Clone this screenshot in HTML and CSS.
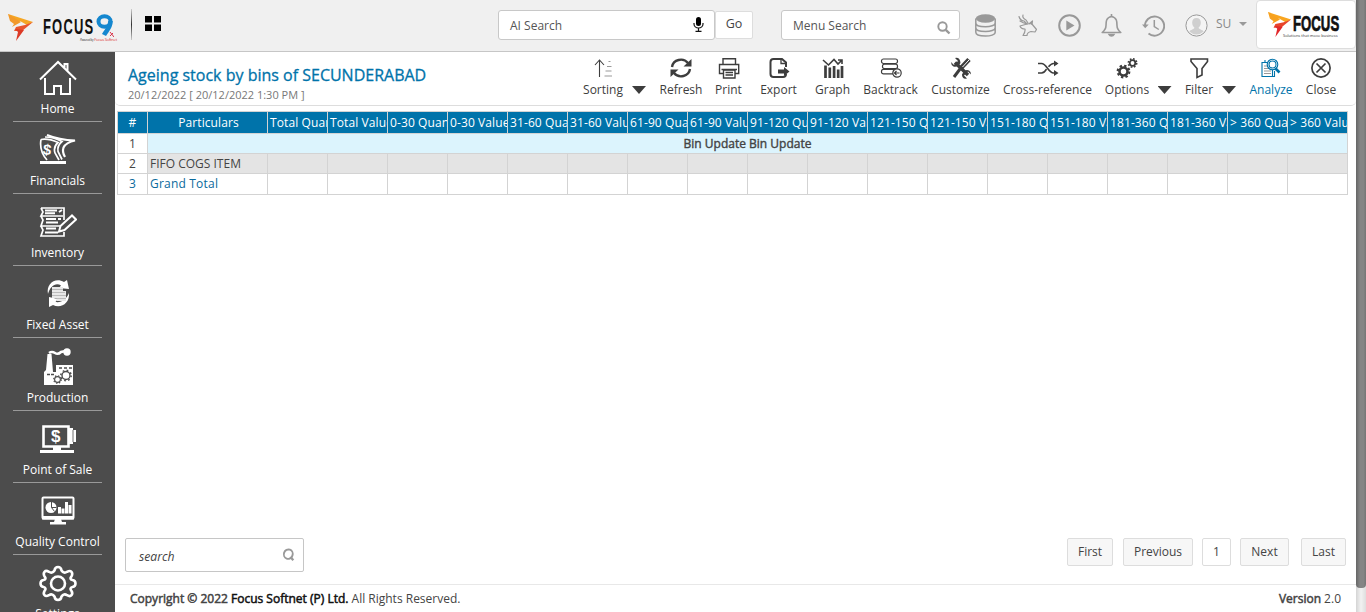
FILE: index.html
```html
<!DOCTYPE html>
<html lang="en">
<head>
<meta charset="utf-8">
<title>Ageing stock by bins</title>
<link rel="stylesheet" href="styles.css">
</head>
<body>
<div class="app">
  <header class="topbar">
    <div class="brand">
      <svg class="brand-mark" width="26" height="28" viewBox="0 0 26 28"><path d="M0 0L25 8L19 11L12 7L6 9Z" fill="#f5a623"/><path d="M0 0L13 8L4 13L6 10L2 7Z" fill="#f2992a"/><path d="M25 8L14 17L6 17L8 13L17 11Z" fill="#e8552b"/><path d="M7 15L16 16L8 27L10 18Z" fill="#dc3a26"/></svg>
      <span class="brand-name">FOCUS</span>
      <svg class="brand-nine" width="18" height="23" viewBox="0 0 18 23" fill="none" stroke="#1487cf"><ellipse cx="8.500" cy="7.500" rx="6" ry="5.300" stroke-width="4"/><path d="M14.500 7c0 7-4 9-6.500 14" stroke-width="4.500"/><path d="M14 18l4 5M14 22l3-3" stroke="#d8334a" stroke-width="1"/></svg>
      <span class="brand-sub"><i>Powered by</i> Focus Softnet</span>
    </div>
    <span class="brand-rule"></span>
    <svg class="grid-icon" width="16" height="15" viewBox="0 0 16 15"><path d="M0 0h7v6.500H0zM9 0h7v6.500H9zM0 8.500h7V15H0zM9 8.500h7V15H9z"/></svg>
    <div class="field ai"><span>AI Search</span>
      <svg width="11" height="15" viewBox="0 0 11 15"><rect x="3" y="0" width="5" height="9" rx="2.500"/><path d="M1 6v1a4.500 4 0 0 0 9 0V6M5.500 11v3M2.500 14.300h6" fill="none" stroke="#111" stroke-width="1.200"/></svg>
    </div>
    <button class="go">Go</button>
    <div class="field menu"><span>Menu Search</span>
      <svg width="14" height="14" viewBox="0 0 14 14" fill="none" stroke="#999"><circle cx="5.500" cy="5.500" r="4.200" stroke-width="1.900"/><path d="M8.800 8.800l3.700 3.700" stroke-width="2.400"/></svg>
    </div>
    <div class="top-icons">
      <svg width="21" height="23" viewBox="0 0 21 23"><g fill="#999"><ellipse cx="10.500" cy="4.500" rx="9.700" ry="4.200"/></g><path d="M.8 4.500v13.800c0 5 19.400 5 19.400 0V4.500M.8 9c0 5 19.400 5 19.400 0M.8 13.700c0 5 19.400 5 19.400 0" fill="none" stroke="#999" stroke-width="1.500"/></svg>
      <svg width="19" height="23" viewBox="0 0 19 23" fill="none" stroke="#999" stroke-width="1.200" stroke-linejoin="round" stroke-linecap="round"><path d="M1 2.500q1 4 5 4.500l3 3M5 1q-1 3 3 5l2 3M2 7q3 2 7 3"/><path d="M9 10L2 12q1 3 5 3 .500 3-2 6.500h4q0-3 4-4l4 .500 1.500-2.500-5-6z"/><path d="M11.500 9.500l3-2.500-.5 3.500"/></svg>
      <svg width="23" height="23" viewBox="0 0 23 23"><circle cx="11.500" cy="11.500" r="10.300" fill="none" stroke="#999" stroke-width="2"/><path d="M8.300 6.500l8.200 5-8.200 5z" fill="#999"/></svg>
      <svg width="21" height="23" viewBox="0 0 21 23" fill="none" stroke="#999" stroke-width="1.600"><path d="M10.500 2.500C5 3.500 5 8 5 11.500S3 17 1.200 18.500h18.600C18 17 16 15 16 11.500s0-8-5.500-9z" stroke-linejoin="round"/><path d="M10.500 0v3M8 20.500c1 2 4 2 5 0z" fill="#999"/></svg>
      <svg width="23" height="22" viewBox="0 0 23 22" fill="none" stroke="#999" stroke-width="1.900"><path d="M3 12a9.600 9.600 0 1 1 3.500 6.500"/><path d="M0 9.500l3.200 3.700 3.500-3.700z" fill="#999" stroke="none"/><path d="M12.300 5v6.500l4.500 3" stroke-width="1.500"/></svg>
      <svg width="23" height="23" viewBox="0 0 23 23"><circle cx="11.500" cy="11.500" r="10.600" fill="#f4f4f4" stroke="#999"/><path d="M11.500 4c-3 0-4.500 2-4.300 5 .1 2 1 3.500 2.200 4.600-.200 2-3.800 2-5 4a10 10 0 0 0 14.200 0c-1.200-2-4.800-2-5-4 1.200-1.100 2.100-2.600 2.200-4.600.200-3-1.300-5-4.300-5z" fill="#cfcfcf"/></svg>
    </div>
    <span class="user">SU</span><span class="caret-sm"></span>
    <div class="logo-card">
      <svg class="logo-mark" width="24" height="26" viewBox="0 0 26 28"><path d="M0 0L25 8L19 11L12 7L6 9Z" fill="#f9a51f"/><path d="M0 0L13 8L4 13L6 10L2 7Z" fill="#f7a11f"/><path d="M25 8L14 17L6 17L8 13L17 11Z" fill="#e8452c"/><path d="M7 15L16 16L8 27L10 18Z" fill="#e2282b"/></svg>
      <div class="logo-words"><b>FOCUS</b><small>Solutions that move business</small></div>
    </div>
  </header>

  <div class="main">
    <nav class="side">
      <a class="nav"><svg width="38" height="36" viewBox="0 0 38 36" fill="none" stroke="#fff" stroke-width="2"><path d="M1 19.500L19 2l18 17.500M6 18v16h9v-8h7v8h9V18M25.500 8V4h3v7"/></svg><span>Home</span></a>
      <a class="nav"><svg width="38" height="36" viewBox="0 0 38 36" fill="none" stroke="#fff" stroke-width="1.700"><path d="M2 7.500Q9 6 19 10.500 14 15 16 21l4 7M2 7.500Q0 19 8 28"/><path d="M6 5q8 0 17 4.500-5 4-4 10l4 8"/><path d="M8 3q12 5 28 5.500-9 2-11.500 7Q23 20 26 25" stroke-width="2.200"/><path d="M1 30.500h26" stroke-width="3"/></svg><b class="ico-dollar tilt">$</b><span>Financials</span></a>
      <a class="nav"><svg width="38" height="36" viewBox="0 0 38 36" fill="none" stroke="#fff" stroke-width="1.700"><path d="M2 4h23v7.500M2 4l2 4-2 4h22M2 12l2 4-2 6h20M2 22l2 4-2 6h23v-4M25 11v5"/><path d="M6 6.500h12M6 9.300h10M7 15h10M7 18.500h12M7 24.500h10M6 28.500h13M20 8l3-2M19 15h3" stroke-width="2"/><path d="M20 27.500l1.500-5.500L33 11.500l4 4L25.500 26z" fill="#4c4c4c" stroke-width="2"/></svg><span>Inventory</span></a>
      <a class="nav"><svg width="38" height="36" viewBox="0 0 38 36"><path d="M9 18C7 8 16 1 25 6l3-2 2 9-10-1 2-2.500C17 6 11 10 9 18z" fill="#fff"/><path d="M30 17c1 10-8 16-16 12l-4 2 0-10 9 2-2.500 3c6 1 11-3 13.500-9z" fill="#fff"/><g fill="#e8e8e8" stroke="#777" stroke-width=".4"><path d="M13 11h11v4h3v10h-9l-1-3h-4z" stroke="none"/><path d="M13 13.500h11M13 16.500h13M13 19.500h14M17 22.500h10" fill="none"/></g></svg><span>Fixed Asset</span></a>
      <a class="nav"><svg width="38" height="38" viewBox="0 0 38 38"><path d="M5 37V24l2-2 1.500-16h4L14 24h3v-7h17v20z" fill="#fff"/><path d="M10 5q3-2 6 0t6-1l5-1" fill="none" stroke="#fff" stroke-width="2.500"/><circle cx="28" cy="4" r="3.700" fill="#fff"/><path d="M20 20h3M25 20h3M30 20h3M8 26.500h3M12 26.500h3" stroke="#4c4c4c" stroke-width="1.500"/><g fill="none" stroke="#4c4c4c"><circle cx="27" cy="27.500" r="4" stroke-width="1.400"/><circle cx="27" cy="27.500" r="5.200" stroke-width="1.500" stroke-dasharray="1.700 2.380"/><circle cx="18.500" cy="31.500" r="2.900" stroke-width="1.100"/><circle cx="18.500" cy="31.500" r="3.800" stroke-width="1.200" stroke-dasharray="1.300 1.680"/></g></svg><span>Production</span></a>
      <a class="nav"><svg width="38" height="36" viewBox="0 0 38 36"><path d="M4.500 5.500h25v20h-25z" fill="none" stroke="#fff" stroke-width="2.600"/><path d="M29 7h5v2h3v12h-3v2h-5zM1 29h34v3H1zM14 26h8v4h-8z" fill="#fff"/><path d="M34 9v12" stroke="#4c4c4c" stroke-width=".8"/></svg><b class="ico-dollar">$</b><span>Point of Sale</span></a>
      <a class="nav"><svg width="38" height="36" viewBox="0 0 38 36"><rect x="3.500" y="4.500" width="31" height="21" rx="1" fill="none" stroke="#fff" stroke-width="2"/><path d="M3 23h32v3.500H3zM16 26h6l1 3h4v2.500H11V29h4zM19 14h3v6.500h-3zM22.500 15.500h3v5h-3zM26 9h3v11.500h-3zM29.500 12h3v8.500h-3z" fill="#fff"/><circle cx="12" cy="14.500" r="5.500" fill="#fff"/><path d="M12.500 9v5.500h5M12.500 14.500l3 4" stroke="#4c4c4c" fill="none"/></svg><span>Quality Control</span></a>
      <a class="nav"><svg width="38" height="37" viewBox="0 0 38 37" fill="none" stroke="#fff" stroke-width="2.600"><path stroke-linejoin="round" d="M15.500 5.500Q16 2 19 2t3.500 3.500Q25 9 28 6.800q3-1.600 4.500 0t0 4.500Q30 14 33.500 15q3 .500 3 3.500t-3 3.500Q30 23 32.500 26q1.500 2.500 0 4.200t-4.500 0Q25 28 22.500 31.500 22 35 19 35t-3.500-3.500Q13 28 10 30.200q-3 1.600-4.500 0t0-4.200Q8 23 4.500 22q-3-.500-3-3.500t3-3.500Q8 14 5.500 11.300 4 8.500 5.500 6.800t4.500 0Q13 9 15.500 5.500z"/><circle cx="19" cy="18.500" r="7"/></svg><span>Settings</span></a>
    </nav>

    <section class="content">
      <div class="headline">
        <div class="titles"><h1>Ageing stock by bins of SECUNDERABAD</h1><p>20/12/2022 [ 20/12/2022 1:30 PM ]</p></div>
        <div class="tools">
          <a class="tool"><svg viewBox="0 0 22 22"><path d="M7.500 20V3M3 8l4.500-5L12 8" stroke-width="1.100"/><path d="M16.500 4.500h2M15 9.500h4.500M13.500 14h6M12.500 19h7.500" stroke="#999"/></svg>Sorting</a>
          <i class="caret"></i>
          <a class="tool"><svg viewBox="0 0 22 22"><path d="M2 10A9 8.500 0 0 1 18 6M20 12A9 8.500 0 0 1 4 16" stroke-width="2.400"/><path d="M21.500 2v7.500h-8zM.5 20V12.500h8z" fill="#3d3d3d" stroke="none"/></svg>Refresh</a>
          <a class="tool"><svg viewBox="0 0 22 22" stroke-width="1.400"><path d="M5 8V1.700h12.500V8M5 16.500H1.500v-9h19.200v9H17"/><path d="M5.500 13h11.500v8H5.500z" fill="#fff"/><path d="M3.500 12.500h15.500M7.500 15.500h7.500M7.500 18h7.500"/></svg>Print</a>
          <a class="tool"><svg viewBox="0 0 22 22"><path d="M18 10V5.500L14 2H5.500Q2.500 2 2.500 5v12q0 3 3 3H15q3 0 3-3" stroke-width="2"/><path d="M13 2v4.500h5" stroke-width="1.300"/><path d="M10 12.500h6V10l5.500 4.500L16 19v-2.500h-6z" fill="#3d3d3d" stroke="none"/></svg>Export</a>
          <a class="tool"><svg viewBox="0 0 22 22"><path d="M3.500 8.500v12.500M7.800 10.500V21M12.100 9V21M16.200 12.500V21M20 9v12" stroke-width="2.700"/><path d="M1 3l5.500 5 5.500-5.500 4 4.500 3.500-3.500M16 3h4v4" stroke-width="1.600"/></svg>Graph</a>
          <a class="tool"><svg viewBox="0 0 22 22" stroke-width="1.200"><rect x="1.500" y="2" width="16" height="4.500" rx="2"/><rect x="2.500" y="7.200" width="15" height="4.500" rx="2"/><rect x="1.500" y="12.400" width="13" height="4.500" rx="2"/><circle cx="17" cy="16" r="4.200" fill="#fff"/><path d="M14.500 16h5M16.500 14l-2 2 2 2"/></svg>Backtrack</a>
          <a class="tool"><svg viewBox="0 0 22 22"><path d="M5 5.500L18 18" stroke-width="3.400"/><path d="M1 5l3 3 4-4-3-3q5-1 5.500 5Q7 11 3.500 9.500 1 8 1 5zM21 17.500l-3-3-4 4 3 3q-5 1-5-4 3-6 7-4 2 1 2 4z" fill="#3d3d3d" stroke="none"/><path d="M19 2.500L11 11" stroke-width="4.600"/><path d="M19 3L12.500 10" stroke="#fff" stroke-width="1"/><path d="M10 12l-6 8" stroke-width="3"/></svg>Customize</a>
          <a class="tool"><svg viewBox="0 0 22 22" stroke-width="1.700"><path d="M1 6.500h3.500c5 0 7 9.500 12 9.500H20M1 16h3.500c2 0 4-2 5-3.800M11.500 9.800C13 8 14.500 6.500 16.500 6.500H20"/><path d="M17 3.500l4.500 3-4.500 3zM17 13l4.500 3-4.500 3z" fill="#3d3d3d" stroke="none"/></svg>Cross-reference</a>
          <a class="tool"><svg viewBox="0 0 22 22"><circle cx="7.500" cy="14.500" r="4" stroke-width="2.600"/><circle cx="7.500" cy="14.500" r="5.800" stroke-width="2.200" stroke-dasharray="2.300 2.250"/><circle cx="16.500" cy="6" r="2.800" stroke-width="1.800"/><circle cx="16.500" cy="6" r="4.200" stroke-width="1.600" stroke-dasharray="1.700 1.600"/></svg>Options</a>
          <i class="caret"></i>
          <a class="tool"><svg viewBox="0 0 22 22"><path d="M3 2h16.500v2.500l-5.500 7V18L9 20.500v-9L3 4.500z" stroke-width="1.600"/></svg>Filter</a>
          <i class="caret"></i>
          <a class="tool blue"><svg viewBox="0 0 22 22" stroke-width="1.100"><path d="M2 5.500h10.500v14H2zM5 5.500V3M14.500 14v5.500h-2"/><path d="M4 9h4M4 11.500h5M4 14h7M4 16.500h7" stroke="#999"/><circle cx="12.500" cy="7.500" r="5.300" fill="#fff"/><circle cx="12.500" cy="7.500" r="3.500"/><path d="M15.500 11.500l4 4" stroke-width="2.600"/></svg>Analyze</a>
          <a class="tool"><svg viewBox="0 0 22 22" stroke-width="1.700"><circle cx="11" cy="11" r="9.100"/><path d="M6.500 6.500l9 9M15.500 6.500l-9 9"/></svg>Close</a>
        </div>
      </div>

      <div class="sheet">
        <div class="row head"><span>#</span><span>Particulars</span><span>Total Quantity</span><span>Total Value</span><span>0-30 Quantity</span><span>0-30 Value</span><span>31-60 Quantity</span><span>31-60 Value</span><span>61-90 Quantity</span><span>61-90 Value</span><span>91-120 Quantity</span><span>91-120 Value</span><span>121-150 Quantity</span><span>121-150 Value</span><span>151-180 Quantity</span><span>151-180 Value</span><span>181-360 Quantity</span><span>181-360 Value</span><span>&gt; 360 Quantity</span><span>&gt; 360 Value</span></div>
        <div class="row group"><span>1</span><span class="wide">Bin Update Bin Update</span></div>
        <div class="row alt"><span>2</span><span>FIFO COGS ITEM</span><span></span><span></span><span></span><span></span><span></span><span></span><span></span><span></span><span></span><span></span><span></span><span></span><span></span><span></span><span></span><span></span><span></span><span></span></div>
        <div class="row total"><span>3</span><span>Grand Total</span><span></span><span></span><span></span><span></span><span></span><span></span><span></span><span></span><span></span><span></span><span></span><span></span><span></span><span></span><span></span><span></span><span></span><span></span></div>
      </div>

      <div class="bottom">
        <div class="find"><em>search</em><svg width="13" height="14" viewBox="0 0 13 14" fill="none" stroke="#999"><ellipse cx="6.300" cy="6" rx="4.400" ry="4.700" transform="rotate(20 6 6)" stroke-width="1.900"/><path d="M8.500 9l2.800 3.300" stroke-width="2.300"/></svg></div>
        <div class="pager"><a class="p-first">First</a><a class="p-prev">Previous</a><a class="p-cur">1</a><a class="p-next">Next</a><a class="p-last">Last</a></div>
      </div>
      <footer class="foot"><div><b>Copyright © 2022 <span class="dark">Focus Softnet (P) Ltd.</span></b> All Rights Reserved.</div><div><b>Version</b> 2.0</div></footer>
    </section>
  </div>
</div>
<div class="scroll"><div class="thumb"></div></div>
</body>
</html>
```
FILE: styles.css
```css
* { box-sizing: border-box; }
body {
  margin: 0; width: 1366px; height: 612px; overflow: hidden;
  display: flex; background: #fff; color: #444;
  font: 12px/16px "Open Sans", sans-serif;
}
h1, p { margin: 0; }
svg { display: block; flex: none; }
b { font-weight: 400; -webkit-text-stroke: .5px currentColor; }
.app { width: 1356px; height: 612px; display: flex; flex-direction: column; }
.scroll { width: 10px; height: 612px; background: linear-gradient(90deg, #d4d4d4, #f2f2f2 50%, #dedede); }
.thumb { height: 588px; border-radius: 0 0 4px 4px; background: linear-gradient(90deg, #656565, #858585 40%, #858585 75%, #757575); }

/* top bar */
.topbar { height: 52px; flex: none; display: flex; background: #f0f0f0; border-bottom: 1px solid #c6c6c6; }
.brand { position: relative; width: 131px; height: 51px; }
.brand-mark { position: absolute; left: 8px; top: 14px; }
.brand-name { position: absolute; left: 43px; top: 13px; font: 700 22px/28px "Liberation Sans", sans-serif; color: #111; transform: scaleX(.59); transform-origin: 0 0; letter-spacing: 2px; }
.brand-nine { position: absolute; left: 96px; top: 14px; }
.brand-sub { position: absolute; left: 80px; top: 37px; font-size: 4px; line-height: 6px; letter-spacing: -.2px; color: #d33; white-space: nowrap; }
.brand-sub i { color: #333; font-size: 3px; }
.brand-rule { width: 1px; height: 31px; margin-top: 9px; background: linear-gradient(#ccc, #333 50%, #ccc); }
.grid-icon { margin: 16px 0 0 13px; }
.field { height: 30px; margin-top: 10px; display: flex; justify-content: space-between; background: #fff; border: 1px solid #c8c8c8; border-radius: 3px; line-height: 29px; font-size: 12px; color: #555; }
.field span { padding-left: 11px; }
.ai { width: 217px; margin-left: 337px; }
.ai svg { margin: 6px 10px 0 0; }
.go { width: 38px; height: 28px; margin: 11px 0 0; padding: 0 0 2px; border: 1px solid #ddd; border-radius: 2px; background: #fff; color: #444; font: 12.5px/24px "Open Sans", sans-serif; }
.menu { width: 179px; margin-left: 28px; }
.menu svg { margin: 10px 8px 0 0; }
.top-icons { display: grid; grid-template-columns: repeat(6, 42.2px); align-items: center; justify-items: center; width: 253px; margin-left: 4px; }
.user { width: 16px; margin: 16px 0 0 -1px; color: #888; font-size: 12px; }
.caret-sm { width: 8px; height: 4px; margin: 22px 0 0 7px; background: #999; clip-path: polygon(0 0, 100% 0, 50% 100%); }
.logo-card { width: 100px; height: 49px; margin-left: auto; display: flex; background: #fff; border: 1px solid #ddd; border-radius: 4px; }
.logo-mark { margin: 11px 0 0 11px; }
.logo-words { width: 55px; margin-top: 10px; position: relative; }
.logo-words b { position: absolute; left: 1px; top: 0; color: #111; font: 700 22px/26px "Liberation Sans", sans-serif; transform: scaleX(.6); transform-origin: 0 0; -webkit-text-stroke: .7px #111; }
.logo-words small { position: absolute; left: -9px; top: 22px; color: #333; font-size: 4px; line-height: 6px; white-space: nowrap; }

/* side navigation */
.main { display: flex; height: 560px; }
.side { width: 115px; height: 560px; overflow: hidden; background: #4c4c4c; flex: none; padding: 0 13px; }
.nav { position: relative; height: 72.17px; display: flex; flex-direction: column; align-items: center; color: #fff; border-bottom: 1px solid #999; font-size: 12px; line-height: 18px; white-space: nowrap; }
.nav:first-child { height: 70px; }
.nav svg { margin-top: 10px; }
.nav:first-child svg { margin-top: 8px; }
.nav span { margin-top: auto; margin-bottom: 3px; }
.ico-dollar { position: absolute; left: 38px; top: 16px; font: 700 17px/20px "Liberation Sans", sans-serif; -webkit-text-stroke: 0; }
.tilt { left: 30px; top: 18px; transform: rotate(8deg); font-size: 15px; }

/* page heading and tools */
.content { flex: 1; display: flex; flex-direction: column; }
.headline { height: 54px; flex: none; display: flex; border-bottom: 1px solid #ddd; border-radius: 0 0 5px 5px; }
.titles { width: 462px; padding: 12px 0 0 13px; }
.titles h1 { font-size: 16px; line-height: 23px; font-weight: 400; color: #0073aa; -webkit-text-stroke: .3px #0073aa; white-space: nowrap; }
.titles p { font-size: 11px; line-height: 16px; color: #777; }
.tools { display: grid; grid-template-columns: 52px 20px 64px 31px 69px 39px 77px 63px 111px 48px 27px 42px 18px 66px 34px; }
.tool { display: flex; flex-direction: column; align-items: center; padding-top: 5px; font-size: 12px; line-height: 18px; white-space: nowrap; color: #3d3d3d; }
.tool svg { width: 22px; height: 22px; margin-bottom: 2px; fill: none; stroke: #3d3d3d; }
.blue { color: #0073aa; }
.blue svg { stroke: #0073aa; }
.caret { justify-self: center; width: 14px; height: 8px; margin-top: 34px; background: #3d3d3d; clip-path: polygon(0 0, 100% 0, 50% 100%); }

/* report grid */
.sheet { margin: 5px 0 0 2px; width: 1231px; border-left: 1px solid #d3d3d3; border-top: 1px solid #d3d3d3; }
.row { display: grid; grid-template-columns: 30px 120px repeat(18, 60px); height: 20px; font-size: 12px; line-height: 19px; }
.row span { overflow: hidden; white-space: nowrap; padding-left: 2px; border-right: 1px solid #d3d3d3; border-bottom: 1px solid #d3d3d3; }
.row span:first-child { padding: 0; text-align: center; }
.head { height: 22px; line-height: 21px; color: #fff; letter-spacing: .1px; }
.head span { background: #0073aa; }
.head span:nth-child(2) { text-align: center; }
.row .wide { grid-column: 2 / -1; padding: 0; text-align: center; background: #dcf4fd; -webkit-text-stroke: .4px #444; }
.alt span:not(:first-child) { background: #e4e4e4; }
.total { height: 21px; color: #0a6a9c; letter-spacing: .2px; }

/* search, pager and footer */
.bottom { margin-top: auto; height: 46px; display: flex; justify-content: space-between; }
.find { width: 179px; height: 34px; margin-left: 10px; padding: 0 8px 0 13px; display: flex; justify-content: space-between; border: 1px solid #c6c6c6; border-radius: 2px; line-height: 35px; font-size: 12.2px; }
.find svg { margin-top: 9px; }
.pager { display: flex; margin-right: 10px; }
.pager a { height: 28px; border: 1px solid #ddd; border-radius: 2px; background: #f7f7f7; text-align: center; font-size: 12px; line-height: 26px; }
.p-first { width: 46px; }
.p-prev { width: 70px; margin-left: 10px; }
.pager .p-cur { width: 29px; margin-left: 9px; background: #fff; }
.p-next { width: 49px; margin-left: 9px; }
.p-last { width: 45px; margin-left: 12px; }
.foot { height: 28px; padding: 6px 15px 0; display: flex; justify-content: space-between; border-top: 1px solid #e8e8e8; font-size: 12px; line-height: 16px; }
.dark { color: #111; }
```
